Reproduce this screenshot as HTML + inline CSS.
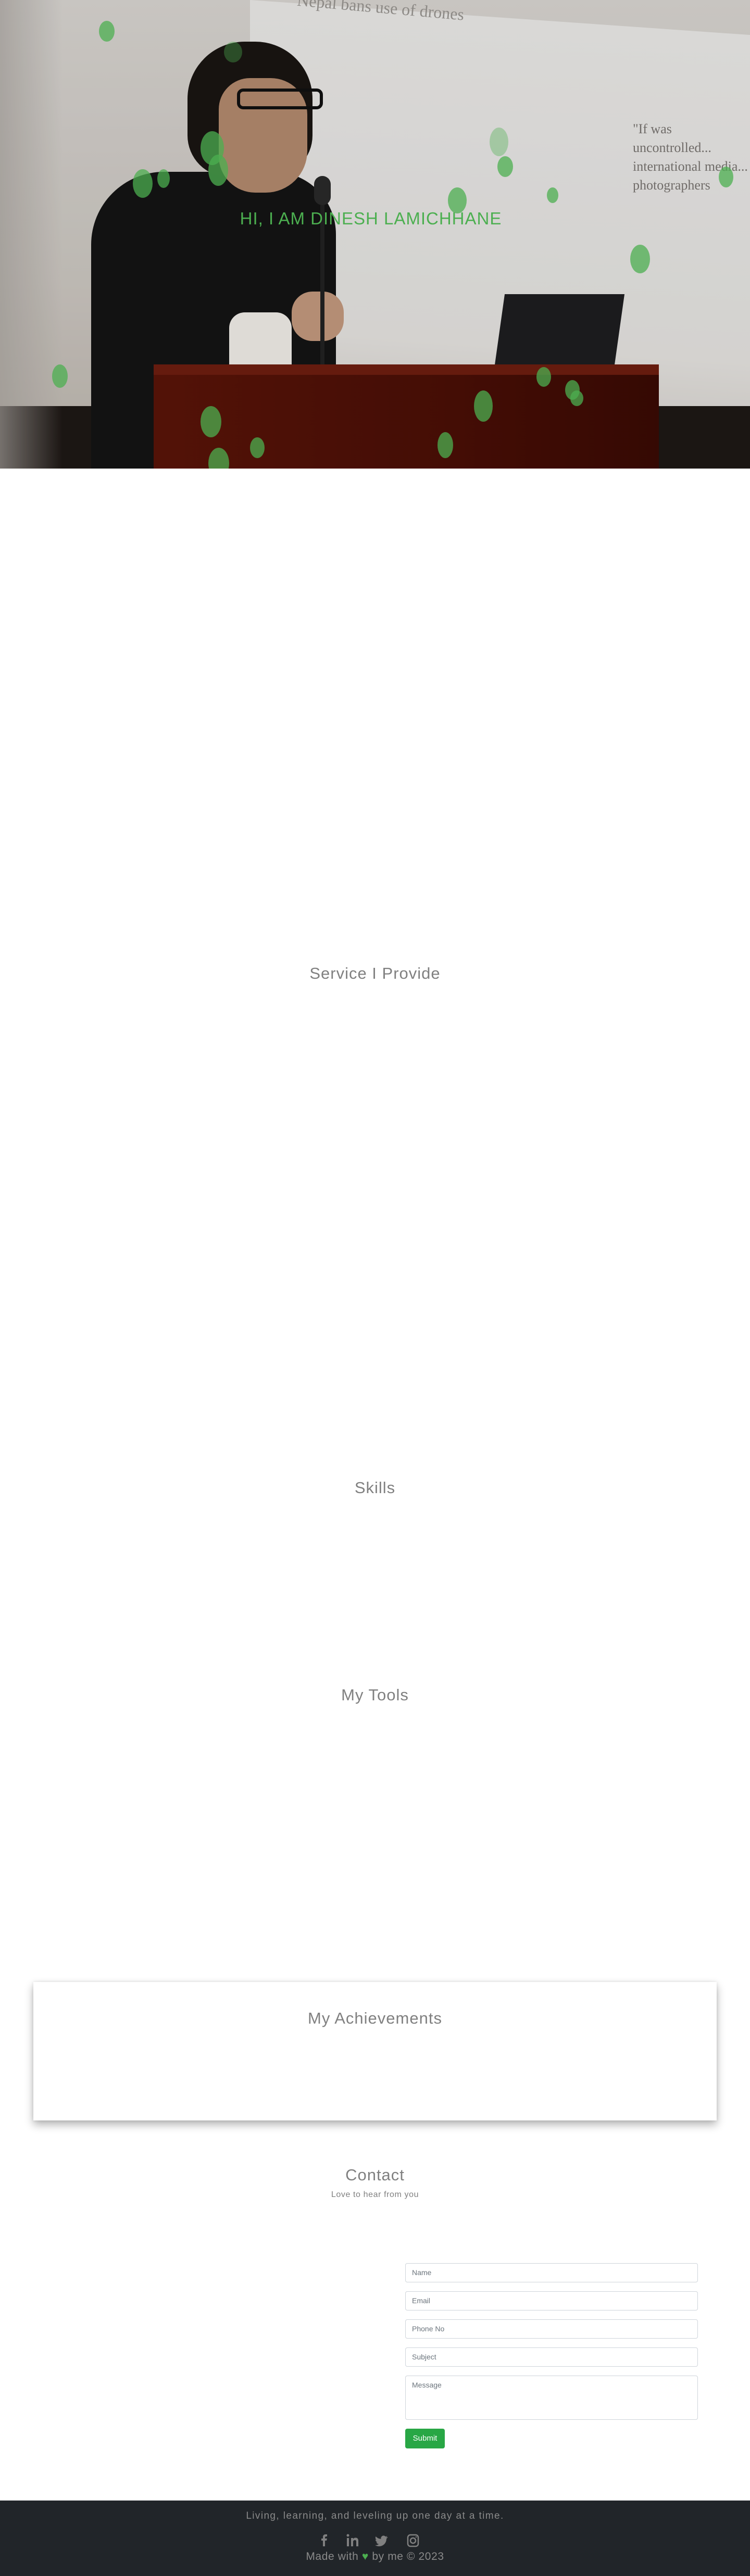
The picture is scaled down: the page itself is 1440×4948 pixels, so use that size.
<!DOCTYPE html>
<html><head><meta charset="utf-8">
<style>
*{margin:0;padding:0;box-sizing:border-box}
body{width:1440px;height:4948px;position:relative;background:#fff;font-family:"Liberation Sans",sans-serif;overflow:hidden}
.hero{position:absolute;left:0;top:0;width:1440px;height:900px;overflow:hidden;background:#cfcac4}
.abs{position:absolute}
.t{position:absolute;left:0;width:1440px;text-align:center;color:#808080;font-size:31px;letter-spacing:1px;line-height:40px}
.inp{position:absolute;left:778px;width:562px;height:37px;border:1px solid #ced4da;border-radius:4px;font-size:14px;color:#6c757d;padding:9px 12px;background:#fff}
.dot{position:absolute;border-radius:50%;background:rgba(76,175,80,.75)}
</style></head><body>
<div class="hero">
 <div class="abs" style="left:0;top:0;width:1440px;height:900px;background:linear-gradient(180deg,#d9d6d2 0%,#cdc8c2 60%,#bfb8b0 100%)"></div>
 <div class="abs" style="left:480px;top:0;width:960px;height:900px;background:linear-gradient(180deg,#ecebe9,#e6e4e1 70%,#d0cbc5);transform:skewY(4deg);transform-origin:0 0"></div>
 <div class="abs" style="left:0;top:780px;width:1440px;height:120px;background:#1e1815"></div>
 <div class="abs" style="left:0;top:0;width:120px;height:900px;background:linear-gradient(90deg,rgba(170,165,160,.7),rgba(0,0,0,0))"></div>
 <div class="abs" style="left:570px;top:0;width:420px;height:30px;color:#9a9692;font:32px 'Liberation Serif',serif;transform:rotate(5deg)">Nepal bans use of drones</div>
 <div class="abs" style="left:1215px;top:230px;width:225px;height:250px;color:#7a7672;font:26px 'Liberation Serif',serif;line-height:36px">"If was uncontrolled... international media... photographers</div>
 <div class="abs" style="left:175px;top:330px;width:470px;height:570px;background:#141414;border-radius:140px 120px 0 0"></div>
 <div class="abs" style="left:440px;top:600px;width:120px;height:400px;background:#f1eee9;border-radius:30px 30px 0 0"></div>
 <div class="abs" style="left:360px;top:80px;width:240px;height:260px;background:#1a1512;border-radius:110px 110px 80px 80px"></div>
 <div class="abs" style="left:420px;top:150px;width:170px;height:220px;background:#b48a6e;border-radius:60px 70px 80px 70px"></div>
 <div class="abs" style="left:455px;top:170px;width:165px;height:40px;border:6px solid #111;border-radius:12px"></div>
 <div class="abs" style="left:560px;top:560px;width:100px;height:95px;background:#c49a7e;border-radius:40px"></div>
 <div class="abs" style="left:615px;top:340px;width:8px;height:400px;background:#222"></div>
 <div class="abs" style="left:603px;top:338px;width:32px;height:56px;background:#2a2a2a;border-radius:16px"></div>
 <div class="abs" style="left:955px;top:565px;width:230px;height:200px;background:#1e1e20;transform:skewX(-8deg)"></div>
 <div class="abs" style="left:295px;top:700px;width:970px;height:200px;background:linear-gradient(90deg,#5a1408,#4a0f06 60%,#3a0a04);border-radius:8px 8px 0 0"></div>
 <div class="abs" style="left:295px;top:700px;width:970px;height:20px;background:#6e1e10"></div>
 <div class="abs" style="left:0;top:0;width:1440px;height:900px;background:rgba(0,0,0,.08)"></div>
 <div class="dot" style="left:190px;top:40px;width:30px;height:40px"></div>
 <div class="dot" style="left:430px;top:80px;width:35px;height:40px;opacity:.5"></div>
 <div class="dot" style="left:860px;top:360px;width:36px;height:50px"></div>
 <div class="dot" style="left:955px;top:300px;width:30px;height:40px"></div>
 <div class="dot" style="left:940px;top:245px;width:36px;height:55px;opacity:.5"></div>
 <div class="dot" style="left:1210px;top:470px;width:38px;height:55px"></div>
 <div class="dot" style="left:1380px;top:320px;width:28px;height:40px"></div>
 <div class="dot" style="left:385px;top:780px;width:40px;height:60px"></div>
 <div class="dot" style="left:400px;top:860px;width:40px;height:60px"></div>
 <div class="dot" style="left:100px;top:700px;width:30px;height:45px"></div>
 <div class="dot" style="left:910px;top:750px;width:36px;height:60px"></div>
 <div class="dot" style="left:840px;top:830px;width:30px;height:50px"></div>
 <div class="dot" style="left:385px;top:252px;width:45px;height:65px"></div>
 <div class="dot" style="left:400px;top:297px;width:38px;height:60px"></div>
 <div class="dot" style="left:255px;top:325px;width:38px;height:55px"></div>
 <div class="dot" style="left:302px;top:325px;width:24px;height:36px"></div>
 <div class="dot" style="left:1030px;top:705px;width:28px;height:38px"></div>
 <div class="dot" style="left:1085px;top:730px;width:28px;height:38px"></div>
 <div class="dot" style="left:1095px;top:750px;width:25px;height:30px"></div>
 <div class="dot" style="left:480px;top:840px;width:28px;height:40px"></div>
 <div class="dot" style="left:1050px;top:360px;width:22px;height:30px"></div>
 <div class="abs" style="left:-8px;top:400px;width:1440px;text-align:center;color:#4caf50;font-size:33px;letter-spacing:1px;line-height:40px">HI, I AM DINESH LAMICHHANE</div>
</div>

<div class="t" style="top:1850px">Service I Provide</div>
<div class="t" style="top:2838px">Skills</div>
<div class="t" style="top:3236px">My Tools</div>

<div class="abs" style="left:64px;top:3807px;width:1312px;height:266px;background:#fff;box-shadow:0 8px 16px rgba(0,0,0,.3),0 0 6px rgba(0,0,0,.1)"></div>
<div class="t" style="top:3857px">My Achievements</div>

<div class="t" style="top:4158px">Contact</div>
<div class="t" style="top:4206px;font-size:16px;line-height:20px;letter-spacing:.6px">Love to hear from you</div>

<div class="inp" style="top:4347px">Name</div>
<div class="inp" style="top:4401px">Email</div>
<div class="inp" style="top:4455px">Phone No</div>
<div class="inp" style="top:4509px">Subject</div>
<div class="inp" style="top:4563px;height:85px">Message</div>
<div class="abs" style="left:778px;top:4665px;width:76px;height:38px;background:#28a745;border-radius:4px;color:#fff;font-size:15px;line-height:38px;text-align:center">Submit</div>

<div class="abs" style="left:0;top:4803px;width:1440px;height:145px;background:#212529"></div>
<div class="abs" style="left:0;top:4821px;width:1440px;text-align:center;color:#8a8a8a;font-size:19px;letter-spacing:1.4px;line-height:24px">Living, learning, and leveling up one day at a time.</div>
<div class="abs" style="left:600px;top:4865px;width:240px;height:28px">
 <svg width="240" height="28" viewBox="0 0 240 28" fill="#808080">
  <path d="M20 26V15h-3v-4h3V8c0-3 2-5 5-5h3v4h-2c-1 0-2 1-2 2v2h4l-1 4h-3v11z"/>
  <rect x="66" y="10" width="4" height="16"/><circle cx="68" cy="5" r="2.5"/>
  <path d="M74 10h4v2c1-2 3-2.5 5-2.5 3 0 5 2 5 6V26h-4v-9c0-2-1-3-2.5-3S78 15 78 17v9h-4z"/>
  <path d="M144 8c-1 .5-2 .7-3 .8 1-.7 2-1.6 2.3-2.8-1 .6-2 1-3.2 1.2a5 5 0 0 0-8.6 4.6C127.4 11.6 124 9.7 121.6 7c-1.5 2.4-.6 5.3 1.5 6.6-.8 0-1.6-.3-2.200-.6 0 2.5 1.7 4.5 4 5-.7.2-1.5.2-2.2.1.6 2 2.5 3.5 4.7 3.5-2 1.6-4.7 2.5-7.4 2.2 2.2 1.4 4.9 2.2 7.7 2.2 9.3 0 14.5-7.7 14.2-14.7 1-.7 1.8-1.6 2.4-2.5z"/>
  <rect x="183" y="4" width="20" height="22" rx="5" fill="none" stroke="#808080" stroke-width="2.5"/>
  <circle cx="193" cy="15" r="5" fill="none" stroke="#808080" stroke-width="2.5"/><circle cx="199" cy="8" r="1.3"/>
 </svg>
</div>
<div class="abs" style="left:0;top:4898px;width:1440px;text-align:center;color:#8a8a8a;font-size:21px;letter-spacing:.6px;line-height:26px">Made with <span style="color:#4caf50">&#9829;</span> by me © 2023</div>
</body></html>
